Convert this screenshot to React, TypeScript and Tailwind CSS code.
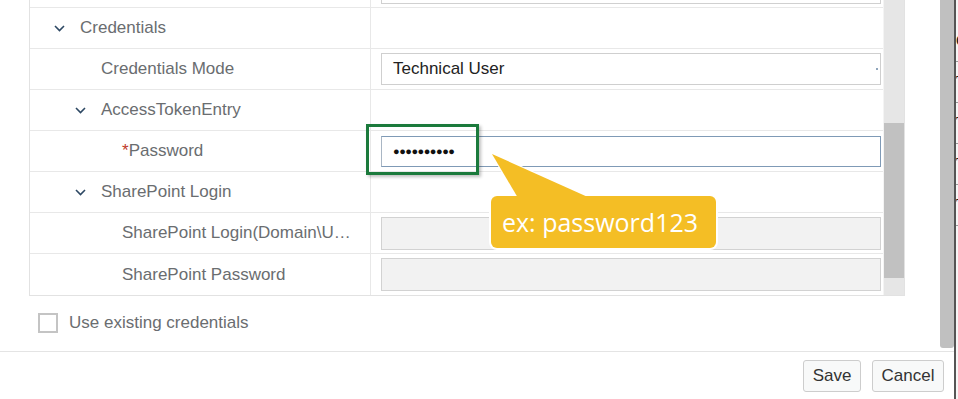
import React from "react";

// Tree rows of the credentials table
type Row = {
  label: string;
  indent: number;
  chevron?: boolean;
  required?: boolean;
  field?: "select" | "password" | "disabled";
  value?: string;
};

const rows: Row[] = [
  { label: "Credentials", indent: 50, chevron: true },
  { label: "Credentials Mode", indent: 71, field: "select", value: "Technical User" },
  { label: "AccessTokenEntry", indent: 71, chevron: true },
  { label: "Password", indent: 92, required: true, field: "password" },
  { label: "SharePoint Login", indent: 71, chevron: true },
  { label: "SharePoint Login(Domain\\U…", indent: 92, field: "disabled" },
  { label: "SharePoint Password", indent: 92, field: "disabled" },
];

const Chevron = () => (
  <svg className="w-[11px] h-[7px] mr-[15px]" viewBox="0 0 11 7" fill="none">
    <polyline points="1,1 5.5,5.5 10,1" stroke="#2d4863" strokeWidth={1.6} />
  </svg>
);

const Field = ({ row }: { row: Row }) => {
  if (row.field === "select") {
    return (
      <div className="relative h-[32px] w-full border border-[#cfcfcf] bg-white flex items-center px-[11px] text-[#222]">
        {row.value}
        <span className="absolute right-[2px] top-[14px] w-[2px] h-[2px] bg-[#8fa5bb]" />
      </div>
    );
  }
  if (row.field === "password") {
    return (
      <div className="h-[31px] w-full border border-[#7f9ab6] border-l-[#a9b6c4] border-l-dotted bg-white flex items-center px-[11px] text-[#111] text-[11px] tracking-[-0.5px]">
        ●●●●●●●●●●
      </div>
    );
  }
  return <div className="h-[33px] w-full border border-[#d2d2d2] bg-[#f2f2f2]" />;
};

const App = () => {
  return (
    <div className="relative w-[958px] h-[399px] overflow-hidden bg-white flex font-['Liberation_Sans',Arial,sans-serif] text-[17px]">
      {/* Dialog */}
      <div className="w-[954px] flex flex-col">
        <div className="flex h-[351px]">
          <div className="flex-1 flex flex-col">
            {/* Table */}
            <div className="ml-[29px] w-[876px] flex border-l border-r border-b border-[#e2e2e2]">
              <div className="flex-1 flex flex-col">
                {/* partially scrolled row */}
                <div className="flex h-[8px] border-b border-[#e8e8e8]">
                  <div className="w-[341px] border-r border-[#e8e8e8]" />
                  <div className="flex-1 pl-[10px] pr-[2px]">
                    <div className="h-[4px] border-x border-b border-[#d0d0d0]" />
                  </div>
                </div>
                {rows.map((row) => (
                  <div key={row.label} className="flex h-[41px] border-b border-[#e8e8e8] last:border-b-0">
                    <div
                      className="w-[341px] border-r border-[#e8e8e8] flex items-center text-[#6a6d70] whitespace-nowrap"
                      style={{ paddingLeft: row.chevron ? row.indent - 26 : row.indent }}
                    >
                      {row.chevron && <Chevron />}
                      {row.required && <span className="text-[#c0392b]">*</span>}
                      {row.label}
                    </div>
                    <div className="flex-1 flex items-center pl-[10px] pr-[2px]">
                      {row.field && <Field row={row} />}
                    </div>
                  </div>
                ))}
              </div>
              {/* table scrollbar */}
              <div className="w-[21px] bg-[#e6e6e6] border-l border-[#f4f4f4] pt-[123px]">
                <div className="h-[155px] bg-[#c1c1c1]" />
              </div>
            </div>

            {/* Checkbox */}
            <div className="flex-1 flex items-center pl-[38px] pb-[1px]">
              <div className="w-[20px] h-[20px] border-2 border-[#c4c4c4] bg-white" />
              <span className="ml-[11px] text-[#6a6d70]">Use existing credentials</span>
            </div>
          </div>
          {/* dialog scrollbar */}
          <div className="w-[14px] h-[348px] bg-[#c0c0c0] rounded-b-[3px]" />
        </div>

        {/* Footer */}
        <div className="flex-1 border-t border-[#e4e4e4] flex justify-end items-start pt-[8px] pr-[10px] gap-[11px]">
          <button className="w-[58px] h-[32px] border border-[#cdcdcd] rounded-[3px] bg-[#f8f9f9] text-[#333]">
            Save
          </button>
          <button className="w-[72px] h-[32px] border border-[#cdcdcd] rounded-[3px] bg-[#f8f9f9] text-[#333]">
            Cancel
          </button>
        </div>
      </div>

      {/* Page behind the dialog */}
      <div className="flex-1 border-l-2 border-[#555] bg-[#f6f6f6] overflow-hidden font-['Liberation_Serif',serif] text-[16px] text-[#222] pt-[21px]">
        {["C", "T", "T", "T", "T"].map((c, i) => (
          <div key={i} className="h-[41px] border-b border-[#9a9a9a] flex items-center">
            {c}
          </div>
        ))}
      </div>

      {/* Annotation: highlight box */}
      <div className="absolute left-[366px] top-[124px] w-[113px] h-[51px] border-[3px] border-[#1b7a3c] shadow-[2px_2px_3px_rgba(0,0,0,0.25)]" />

      {/* Annotation: callout */}
      <svg className="absolute left-[480px] top-[145px] w-[250px] h-[60px]" viewBox="0 0 250 60">
        <polygon points="12,9 38,53 110,53" fill="#f4be25" stroke="#fff" strokeWidth={2} strokeLinejoin="round" />
      </svg>
      <div className="absolute left-[491px] top-[196px] w-[225px] h-[52px] rounded-[6px] bg-[#f4be25] ring-2 ring-white flex items-center pl-[11px] font-['Open_Sans',sans-serif] text-[25px] text-white leading-none">
        ex: password123
      </div>
      <svg className="absolute left-[480px] top-[145px] w-[250px] h-[60px] pointer-events-none" viewBox="0 0 250 60">
        <polygon points="12,9 38,53 110,53" fill="#f4be25" />
      </svg>
    </div>
  );
};

export default App;
